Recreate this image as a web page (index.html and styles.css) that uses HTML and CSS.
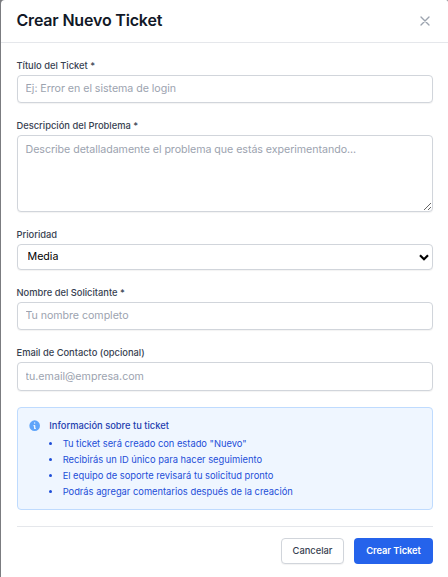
FILE: index.html
```html
<!DOCTYPE html>
<html lang="es">
<head>
<meta charset="utf-8">
<title>Crear Nuevo Ticket</title>
<link rel="stylesheet" href="styles.css">
</head>
<body>
<main class="modal">
  <header class="modal-header">
    <h1>Crear Nuevo Ticket</h1>
    <button class="close" type="button" aria-label="Cerrar">
      <svg viewBox="0 0 24 24" fill="none" stroke="currentColor" stroke-width="2" stroke-linecap="round" stroke-linejoin="round"><path d="M6 18L18 6M6 6l12 12"/></svg>
    </button>
  </header>
  <form class="form">
    <div class="field">
      <label for="titulo">Título del Ticket *</label>
      <input id="titulo" class="control" type="text" placeholder="Ej: Error en el sistema de login">
    </div>
    <div class="field">
      <label for="descripcion">Descripción del Problema *</label>
      <textarea id="descripcion" class="control area" placeholder="Describe detalladamente el problema que estás experimentando..."></textarea>
    </div>
    <div class="field">
      <label for="prioridad">Prioridad</label>
      <div class="select-wrap">
        <select id="prioridad" class="control select"><option>Media</option></select>
        <svg class="chevron" viewBox="0 0 10 7" fill="none" stroke="currentColor" stroke-width="2.2"><path d="M1 1.2L5 5.2L9 1.2"/></svg>
      </div>
    </div>
    <div class="field">
      <label for="nombre">Nombre del Solicitante *</label>
      <input id="nombre" class="control" type="text" placeholder="Tu nombre completo">
    </div>
    <div class="field">
      <label for="email">Email de Contacto (opcional)</label>
      <input id="email" class="control email" type="email" placeholder="tu.email@empresa.com">
    </div>
    <section class="info">
      <svg class="info-icon" viewBox="0 0 20 20" fill="currentColor"><path fill-rule="evenodd" clip-rule="evenodd" d="M18 10a8 8 0 11-16 0 8 8 0 0116 0zm-7-4a1 1 0 11-2 0 1 1 0 012 0zM9 9a1 1 0 000 2v3a1 1 0 001 1h1a1 1 0 100-2v-3a1 1 0 00-1-1H9z"/></svg>
      <div>
        <h2>Información sobre tu ticket</h2>
        <ul>
          <li>Tu ticket será creado con estado "Nuevo"</li>
          <li>Recibirás un ID único para hacer seguimiento</li>
          <li>El equipo de soporte revisará tu solicitud pronto</li>
          <li>Podrás agregar comentarios después de la creación</li>
        </ul>
      </div>
    </section>
    <footer class="actions">
      <button class="btn cancel" type="button">Cancelar</button>
      <button class="btn submit" type="button">Crear Ticket</button>
    </footer>
  </form>
</main>
</body>
</html>
```
FILE: styles.css
```css
* { box-sizing: border-box; }
body {
  margin: 0;
  height: 577px;
  overflow: hidden;
  padding-left: 1px;
  background: #7b7c80;
  font-family: Inter, "Liberation Sans", sans-serif;
}
h1, h2, ul { margin: 0; padding: 0; }
button, input, textarea, select { font-family: inherit; margin: 0; }
.modal {
  height: 577px;
  background: #fff;
  border-radius: 4px 2px 0 0;
}
.modal-header {
  height: 43px;
  padding: 0 15px 2px 15.5px;
  display: flex;
  align-items: center;
  justify-content: space-between;
  border-bottom: 1px solid #e5e7eb;
}
h1 { font-size: 16px; line-height: 21px; font-weight: 600; letter-spacing: -0.18px; color: #111827; }
.close {
  width: 16px;
  height: 16px;
  margin-top: 1px;
  padding: 0;
  border: 0;
  background: none;
  color: #9ca3af;
}
.close svg { display: block; width: 16px; height: 16px; }
.form {
  padding: 16px 15px 0 15.5px;
  display: flex;
  flex-direction: column;
  gap: 16px;
}
.field { display: flex; flex-direction: column; }
label {
  height: 16px;
  font-size: 9.33px;
  line-height: 13.33px;
  font-weight: 500;
  color: #374151;
}
.control {
  width: 100%;
  height: 28px;
  padding: 4px 8px 6px;
  border: 1px solid #d1d5db;
  border-radius: 4px;
  background: #fff;
  box-shadow: 0 1px 1px rgba(0, 0, 0, .05);
  font-size: 10.67px;
  line-height: 16px;
  letter-spacing: -0.05px;
  color: #000;
  outline: 0;
}
.control::placeholder { color: #9ca3af; opacity: 1; }
.area { height: 77px; padding-top: 6px; display: block; resize: vertical; }
.email { height: 29px; padding: 5px 8px; letter-spacing: 0; }
.select-wrap { position: relative; height: 26px; }
.select { height: 26px; padding: 0 10px; appearance: none; display: block; letter-spacing: 0; }
.chevron { position: absolute; right: 4px; top: 10px; width: 10px; height: 7px; color: #000; }
.info {
  height: 103px;
  padding: 11px 11px 11px 10.5px;
  display: flex;
  gap: 8px;
  background: #eff6ff;
  border: 1px solid #bfdbfe;
  border-radius: 4px;
}
.info-icon { width: 13.33px; height: 13.33px; color: #60a5fa; flex: none; }
h2 { font-size: 9.33px; line-height: 13.33px; font-weight: 500; color: #1e40af; }
ul { margin-top: 5px; display: flex; flex-direction: column; gap: 2.67px; list-style: none; }
li {
  display: flex;
  align-items: center;
  font-size: 9.33px;
  line-height: 13.33px;
  color: #1d4ed8;
}
li::before {
  content: "";
  width: 3px;
  height: 3px;
  margin-right: 10.3px;
  border-radius: 50%;
  background: currentColor;
}
.actions {
  padding-top: 11px;
  display: flex;
  justify-content: flex-end;
  gap: 10px;
  border-top: 1px solid #e5e7eb;
}
.btn {
  height: 26px;
  padding: 0;
  border-radius: 4px;
  font-size: 9.33px;
  line-height: 13.33px;
  font-weight: 500;
}
.cancel { width: 63px; border: 1px solid #d1d5db; background: #fff; color: #374151; box-shadow: 0 1px 1px rgba(0, 0, 0, .05); }
.submit { width: 79px; border: 0; background: #2563eb; color: #fff; font-weight: 600; letter-spacing: -0.06px; }
```
